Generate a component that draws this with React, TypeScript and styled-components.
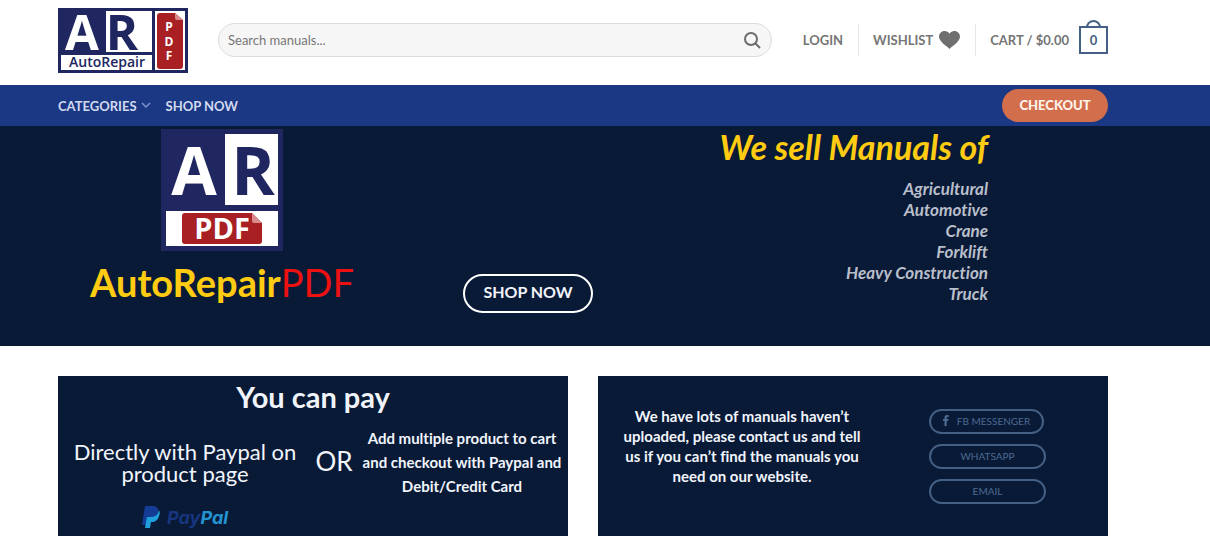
import React from "react";
import styled, { createGlobalStyle } from "styled-components";

const navy = "#091a37";
const logoNavy = "#20265f";
const logoRed = "#a81f24";
const lato = 'Lato, "Liberation Sans", sans-serif';

const GlobalStyle = createGlobalStyle`
  *, *::before, *::after { box-sizing: border-box; }
  body {
    margin: 0;
    background: #fff;
    color: #777;
    font-family: ${lato};
    font-size: 16px;
    font-variant-ligatures: none;
  }
  h1, h2, p, ul { margin: 0; padding: 0; }
  a { color: inherit; text-decoration: none; }
  svg { display: block; flex: none; }
  button, input { font-family: inherit; }
`;

const Container = styled.div`
  padding: 0 102px 0 58px;
`;

const HeaderBar = styled(Container)`
  display: flex;
  align-items: center;
  height: 85px;
  padding-bottom: 5px;
`;

const SearchForm = styled.form`
  display: flex;
  align-items: center;
  flex: 1;
  min-width: 0;
  height: 34px;
  margin: 0 31px 0 30px;
  padding: 0 10px 0 9px;
  border: 1px solid #ddd;
  border-radius: 17px;
  background: #f6f6f6;
`;

const SearchInput = styled.input`
  flex: 1;
  min-width: 0;
  padding: 0;
  border: 0;
  outline: 0;
  background: transparent;
  color: #333;
  font-size: 13px;
  &::placeholder { color: #777; opacity: 1; }
`;

const SearchButton = styled.button`
  padding: 0;
  border: 0;
  background: none;
  color: #6b6b6b;
  cursor: pointer;
`;

const AccountLinks = styled.nav`
  display: flex;
  align-items: center;
`;

const AccountLink = styled.a<{ $divided?: boolean }>`
  display: flex;
  align-items: center;
  gap: ${(p) => (p.$divided ? 6 : 0)}px;
  height: 32px;
  margin-left: ${(p) => (p.$divided ? 15 : 0)}px;
  padding-left: ${(p) => (p.$divided ? 14 : 0)}px;
  border-left: ${(p) => (p.$divided ? "1px solid #e6e6e6" : "0")};
  color: #757575;
  font-size: 13px;
  font-weight: 700;
  white-space: nowrap;
`;

const CartBag = styled.span`
  position: relative;
  display: block;
  width: 29px;
  height: 28px;
  margin-left: 4px;
  border: 2px solid #446084;
  color: #446084;
  font-size: 13px;
  line-height: 24px;
  text-align: center;
  &::before {
    content: "";
    position: absolute;
    left: 5px;
    bottom: 100%;
    width: 15px;
    height: 8px;
    border: 2px solid #446084;
    border-bottom: 0;
    border-radius: 8px 8px 0 0;
  }
`;

const NavBar = styled.div`
  background: #1b3884;
`;

const NavInner = styled(Container)`
  display: flex;
  align-items: center;
  gap: 15px;
  height: 41px;
`;

const NavLink = styled.a`
  display: flex;
  align-items: center;
  gap: 4px;
  color: #d3daf0;
  font-size: 13px;
  font-weight: 700;
`;

const CheckoutLink = styled.a`
  min-width: 106px;
  margin-left: auto;
  padding: 0 16px;
  border-radius: 17px;
  background: #d26e4b;
  color: #fff3ec;
  font-size: 13px;
  font-weight: 900;
  line-height: 33px;
  text-align: center;
`;

const Hero = styled.section`
  background: ${navy};
`;

const HeroInner = styled(Container)`
  display: grid;
  grid-template-columns: 328fr 284fr 438fr;
  min-height: 220px;
`;

const BrandColumn = styled.div`
  display: flex;
  flex-direction: column;
  align-items: center;
  padding-top: 3px;
`;

const BrandName = styled.h1`
  margin-top: 7px;
  color: #fc1;
  font-size: 38px;
  font-weight: 700;
  line-height: 48px;
  white-space: nowrap;
  span { color: #ee1111; font-weight: 400; }
`;

const ActionColumn = styled.div`
  display: flex;
  align-items: flex-start;
  justify-content: center;
  padding-top: 148px;
`;

const ShopLink = styled.a`
  padding: 0 18px 3px;
  border: 2px solid #fff;
  border-radius: 20px;
  color: #f1f4fa;
  font-size: 16px;
  font-weight: 700;
  line-height: 32px;
  white-space: nowrap;
`;

const OfferColumn = styled.div`
  padding-right: 120px;
  font-style: italic;
  font-weight: 700;
  text-align: right;
`;

const OfferTitle = styled.h2`
  color: #fc1;
  font-size: 34px;
  line-height: 42px;
  white-space: nowrap;
`;

const OfferList = styled.ul`
  margin-top: 10px;
  color: #b9bfca;
  font-size: 17px;
  line-height: 21px;
  list-style: none;
`;

const Cards = styled(Container)`
  display: grid;
  grid-template-columns: 1fr 1fr;
  gap: 30px;
  padding-top: 30px;
  padding-bottom: 20px;
`;

const Card = styled.section`
  min-height: 160px;
  background: ${navy};
  color: #f1f5fb;
  text-align: center;
`;

const PayTitle = styled.h2`
  font-size: 29px;
  line-height: 42px;
`;

const PayOptions = styled.div`
  display: grid;
  grid-template-columns: 254fr 44fr 212fr;
`;

const DirectOption = styled.div`
  display: flex;
  flex-direction: column;
  align-items: center;
  padding-top: 23px;
`;

const DirectText = styled.p`
  margin-bottom: 20px;
  font-size: 22px;
  line-height: 22px;
`;

const OrText = styled.p`
  padding-top: 27px;
  font-size: 26px;
  line-height: 32px;
`;

const CartText = styled.p`
  padding-top: 8px;
  font-size: 15px;
  font-weight: 700;
  line-height: 24px;
`;

const ContactCard = styled(Card)`
  display: grid;
  grid-template-columns: 288fr 222fr;
`;

const ContactText = styled.p`
  padding: 30px 24px 0;
  font-size: 15px;
  font-weight: 700;
  line-height: 20px;
`;

const ContactLinks = styled.div`
  display: flex;
  flex-direction: column;
  align-items: flex-start;
  gap: 10px;
  padding: 33px 0 0 43px;
`;

const ContactLink = styled.a<{ $width: number }>`
  display: flex;
  align-items: center;
  justify-content: center;
  gap: 8px;
  width: ${(p) => p.$width}px;
  height: 25px;
  padding-bottom: 2px;
  border: 2px solid #446084;
  border-radius: 13px;
  color: #4d6a90;
  font-size: 10px;
`;

function HeaderLogo() {
  return (
    <svg width="130" height="65" viewBox="0 0 130 65" role="img" aria-label="AutoRepair PDF">
      <rect width="130" height="65" fill={logoNavy} />
      <rect x="48" y="3" width="46" height="41" fill="#fff" />
      <rect x="3" y="47" width="91" height="15" fill="#fff" />
      <rect x="97" y="3" width="30" height="59" fill="#fff" />
      <path d="M102 5h15l8 7v46a3 3 0 0 1-3 3h-20a3 3 0 0 1-3-3V8a3 3 0 0 1 3-3z" fill={logoRed} />
      <path d="M117 5v5a2 2 0 0 0 2 2h6z" fill="#d98a8c" />
      <g fontFamily='"Open Sans", sans-serif' fontWeight="700" textAnchor="middle">
        <text x="24" y="42" fontSize="49" fill="#fff">A</text>
        <text x="64" y="42" fontSize="49" fill={logoNavy}>R</text>
        <text x="49" y="59" fontSize="14" fontWeight="600" fill={logoNavy}>AutoRepair</text>
        <g fontSize="12" fill="#fff">
          <text x="111" y="23">P</text>
          <text x="111" y="38">D</text>
          <text x="111" y="52">F</text>
        </g>
      </g>
    </svg>
  );
}

function HeroLogo() {
  return (
    <svg width="122" height="122" viewBox="0 0 122 122" role="img" aria-label="AR PDF">
      <rect width="122" height="122" fill={logoNavy} />
      <rect x="64" y="5" width="53" height="71" fill="#fff" />
      <rect x="5" y="82" width="112" height="35" fill="#fff" />
      <path d="M24 84h67l10 10v18a3 3 0 0 1-3 3H24a3 3 0 0 1-3-3V87a3 3 0 0 1 3-3z" fill={logoRed} />
      <path d="M91 84v8a2 2 0 0 0 2 2h8z" fill="#d98a8c" />
      <g fontFamily='"Open Sans", sans-serif' fontWeight="700" textAnchor="middle">
        <text x="33" y="66" fontSize="66" fill="#fff">A</text>
        <text x="92" y="66" fontSize="66" fill={logoNavy}>R</text>
        <text x="61" y="110" fontSize="29" fill="#fff">PDF</text>
      </g>
    </svg>
  );
}

function PayPalLogo() {
  return (
    <svg width="90" height="24" viewBox="0 0 90 24" role="img" aria-label="PayPal">
      <path d="M5 1h8c4 0 6 3 5 7-1 4-4 6-8 6H8l-1 6H2z" fill="#143c94" />
      <path d="M19 5c1 2 1 4 0 6-1 4-4 6-7 6h-1l-1 6H5l1-6 1-5h4c4 0 7-2 8-7z" fill="#1f9fdb" />
      <text x="27" y="19" fontFamily="Inter, sans-serif" fontSize="18" fontWeight="700" fontStyle="italic" fill="#17367f">
        Pay<tspan fill="#2394d2">Pal</tspan>
      </text>
    </svg>
  );
}

const SearchIcon = () => (
  <svg width="18" height="18" viewBox="0 0 18 18" fill="none" stroke="currentColor" strokeWidth="2" aria-hidden="true">
    <circle cx="8" cy="8" r="6" />
    <path d="M12 12l5 5" />
  </svg>
);

const HeartIcon = () => (
  <svg width="21" height="18" viewBox="0 0 21 18" fill="#6f6f6f" aria-hidden="true">
    <path d="M10.500 18C8 15 0 11 0 5.500 0 2.500 2.500 0 5.500 0c2.200 0 4 1 5 2.800C11.500 1 13.300 0 15.500 0c3 0 5.500 2.500 5.500 5.500C21 11 13 15 10.500 18z" />
  </svg>
);

const ChevronIcon = () => (
  <svg width="10" height="7" viewBox="0 0 10 7" fill="none" stroke="#7f93cc" strokeWidth="1.500" aria-hidden="true">
    <path d="M1 1l4 4 4-4" />
  </svg>
);

const FacebookIcon = () => (
  <svg width="6" height="11" viewBox="0 0 6 11" fill="currentColor" aria-hidden="true">
    <path d="M1.500 11V6H0V4h1.500V2.500C1.500 1 2.400 0 4 0h1.700v2H4.500c-.5 0-.8.300-.8.800V4h1.900l-.3 2H3.700v5z" />
  </svg>
);

const manualTypes = ["Agricultural", "Automotive", "Crane", "Forklift", "Heavy Construction", "Truck"];

export default function App() {
  return (
    <>
      <GlobalStyle />
      <header>
        <HeaderBar>
          <a href="#home"><HeaderLogo /></a>
          <SearchForm role="search" onSubmit={(e) => e.preventDefault()}>
            <SearchInput type="search" placeholder="Search manuals..." aria-label="Search manuals" />
            <SearchButton type="submit" aria-label="Search"><SearchIcon /></SearchButton>
          </SearchForm>
          <AccountLinks aria-label="Account">
            <AccountLink href="#login">LOGIN</AccountLink>
            <AccountLink href="#wishlist" $divided>WISHLIST<HeartIcon /></AccountLink>
            <AccountLink href="#cart" $divided>CART / $0.00<CartBag>0</CartBag></AccountLink>
          </AccountLinks>
        </HeaderBar>
        <NavBar>
          <NavInner as="nav" aria-label="Main">
            <NavLink href="#categories">CATEGORIES<ChevronIcon /></NavLink>
            <NavLink href="#shop">SHOP NOW</NavLink>
            <CheckoutLink href="#checkout">CHECKOUT</CheckoutLink>
          </NavInner>
        </NavBar>
      </header>
      <main>
        <Hero>
          <HeroInner>
            <BrandColumn>
              <HeroLogo />
              <BrandName>AutoRepair<span>PDF</span></BrandName>
            </BrandColumn>
            <ActionColumn>
              <ShopLink href="#shop">SHOP NOW</ShopLink>
            </ActionColumn>
            <OfferColumn>
              <OfferTitle>We sell Manuals of</OfferTitle>
              <OfferList>
                {manualTypes.map((type) => <li key={type}>{type}</li>)}
              </OfferList>
            </OfferColumn>
          </HeroInner>
        </Hero>
        <Cards>
          <Card>
            <PayTitle>You can pay</PayTitle>
            <PayOptions>
              <DirectOption>
                <DirectText>Directly with Paypal on<br />product page</DirectText>
                <PayPalLogo />
              </DirectOption>
              <OrText>OR</OrText>
              <CartText>Add multiple product to cart<br />and checkout with Paypal and<br />Debit/Credit Card</CartText>
            </PayOptions>
          </Card>
          <ContactCard>
            <ContactText>
              We have lots of manuals haven’t<br />uploaded, please contact us and tell<br />us if you can’t find the manuals you<br />need on our website.
            </ContactText>
            <ContactLinks>
              <ContactLink href="#messenger" $width={115}><FacebookIcon />FB MESSENGER</ContactLink>
              <ContactLink href="#whatsapp" $width={117}>WHATSAPP</ContactLink>
              <ContactLink href="#email" $width={117}>EMAIL</ContactLink>
            </ContactLinks>
          </ContactCard>
        </Cards>
      </main>
    </>
  );
}
